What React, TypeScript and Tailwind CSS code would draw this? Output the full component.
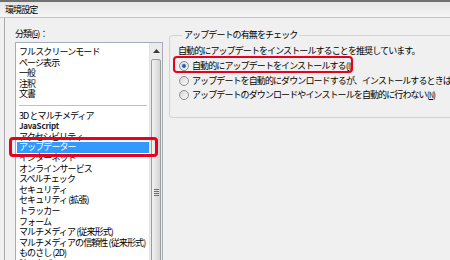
import React from "react";

const font = { fontFamily: '"Noto Sans CJK JP", "Liberation Sans", sans-serif' };

const items: (string | null)[] = [
  "フルスクリーンモード",
  "ページ表示",
  "一般",
  "注釈",
  "文書",
  null,
  "3D とマルチメディア",
  "JavaScript",
  "アクセシビリティ",
  "アップデーター",
  "インターネット",
  "オンラインサービス",
  "スペルチェック",
  "セキュリティ",
  "セキュリティ (拡張)",
  "トラッカー",
  "フォーム",
  "マルチメディア (従来形式)",
  "マルチメディアの信頼性 (従来形式)",
  "ものさし (2D)",
  "読み上げ",
];

function Radio({ checked }: { checked?: boolean }) {
  return (
    <span className="w-[10px] h-[10px] rounded-full border border-[#8e8f8f] bg-gradient-to-br from-[#d6d6d6] to-[#fbfbfb] flex items-center justify-center shrink-0">
      {checked && <span className="w-[4px] h-[4px] rounded-full bg-[#1f5fbf]" />}
    </span>
  );
}

export default function App() {
  return (
    <div
      className="w-[450px] h-[260px] overflow-hidden relative bg-[#f0f0f0] text-[9px] text-black tracking-[-0.9px]"
      style={font}
    >
      {/* title bar */}
      <div className="h-[18px] border-t-2 border-[#707070] border-b border-b-[#c4c4c4] bg-gradient-to-b from-[#e6e6e6] to-[#f5f5f5] flex items-center pl-[5px] leading-none">
        環境設定
      </div>

      {/* body */}
      <div className="flex h-[242px] ml-[4px] border-l border-[#a9a9a9] pl-[10px] overflow-hidden">
        {/* left column */}
        <div className="flex flex-col w-[148px] shrink-0">
          <div className="h-[24px] shrink-0 flex items-center pt-[6px] leading-none">
            分類(<span className="text-[7px] underline">G</span>)：
          </div>
          <div className="flex h-[240px] shrink-0 bg-white border border-[#a5acb5]">
            <div className="flex-1 flex flex-col pt-[4px] pl-[1px] overflow-hidden">
              {items.map((it, i) =>
                it === null ? (
                  <div key={i} className="h-[10.6px] shrink-0 flex items-center px-[2px]">
                    <div className="h-[1px] w-full bg-[#9fc8ef]" />
                  </div>
                ) : (
                  <div
                    key={i}
                    className={
                      "h-[10.6px] shrink-0 leading-[10.6px] pl-[2px] whitespace-nowrap " +
                      (it === "アップデーター" ? "bg-[#3399ff] text-white" : "")
                    }
                  >
                    {it === "JavaScript" ? (
                      <span className="text-[8px] tracking-[-0.2px] font-bold text-[#222]">JavaScript</span>
                    ) : (
                      it
                    )}
                  </div>
                )
              )}
            </div>
            {/* scrollbar */}
            <div className="w-[13px] shrink-0 flex flex-col bg-[#ececec] border-l border-[#e2e2e2]">
              <div className="h-[16px] shrink-0 flex items-center justify-center">
                <svg width="7" height="4" viewBox="0 0 7 4">
                  <path d="M0 4 L3.5 0 L7 4 Z" fill="#3c3c3c" />
                </svg>
              </div>
              <div className="flex-1 mx-[1px] rounded-[2px] border border-[#9c9c9c] bg-gradient-to-r from-[#f2f2f2] via-[#e4e4e4] to-[#d2d2d2] flex flex-col items-center pt-[129px] gap-[1px]">
                <div className="w-[5px] h-[1px] bg-[#6e6e6e]" />
                <div className="w-[5px] h-[1px] bg-[#6e6e6e]" />
                <div className="w-[5px] h-[1px] bg-[#6e6e6e]" />
                <div className="w-[5px] h-[1px] bg-[#6e6e6e]" />
              </div>
            </div>
          </div>
        </div>

        {/* right column */}
        <div className="pl-[6px] pt-[11px]">
          <fieldset className="w-[320px] h-[89px] border border-[#d3d3d3] rounded-[3px] px-[8px]">
            <legend className="ml-[4px] px-[2px] leading-[12px]">アップデートの有無をチェック</legend>
            <div className="flex flex-col pt-[3px]">
              <div className="h-[14px] leading-[14px] whitespace-nowrap">
                自動的にアップデートをインストールすることを推奨しています。
              </div>
              <div className="h-[15px] flex items-center gap-[3px] whitespace-nowrap pl-[1px]">
                <Radio checked />
                <span>
                  自動的にアップデートをインストールする(<span className="text-[7px] underline">I</span>)
                </span>
              </div>
              <div className="h-[15px] flex items-center gap-[3px] whitespace-nowrap pl-[1px]">
                <Radio />
                <span>アップデートを自動的にダウンロードするが、インストールするときは指定する</span>
              </div>
              <div className="h-[14px] flex items-center gap-[3px] whitespace-nowrap pl-[1px]">
                <Radio />
                <span>
                  アップデートのダウンロードやインストールを自動的に行わない(<span className="text-[7px] underline">N</span>)
                </span>
              </div>
            </div>
          </fieldset>
        </div>
      </div>

      {/* red highlight boxes */}
      <div className="absolute left-[173px] top-[56px] w-[180px] h-[17px] border-[2.5px] border-[#e8001c] rounded-[4px]" />
      <div className="absolute left-[9px] top-[137px] w-[149px] h-[20px] border-[3px] border-[#e8001c] rounded-[4px]" />
    </div>
  );
}
